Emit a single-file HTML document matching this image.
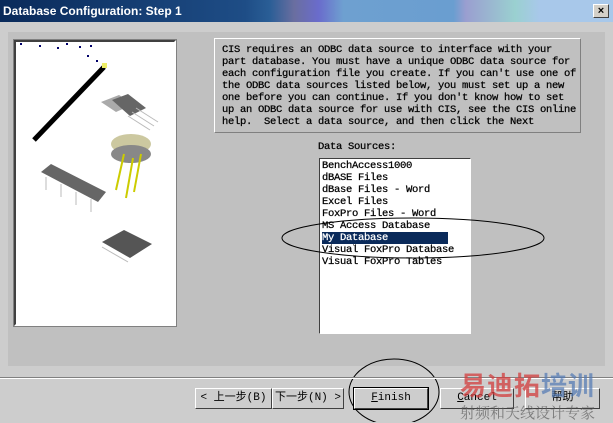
<!DOCTYPE html><html><head><style>
*{margin:0;padding:0;box-sizing:border-box}
body{width:613px;height:422px;background:#cdcdcd;position:relative;overflow:hidden;font-family:"Liberation Mono","Noto Sans CJK SC",monospace;font-size:10px;color:#000}
.a{position:absolute}
.m{font-family:"Liberation Mono",monospace;font-size:10.5px;letter-spacing:-0.3px;-webkit-text-stroke:0.25px #000}
.title{left:0;top:0;width:613px;height:22px;background:linear-gradient(90deg,#0a2a5a 0,#1e4d86 40%,#2a5e96 44%,#6a6ea0 48%,#6a6ccc 52%,#6ea0d0 56%,#6a9ed0 74%,#9a9ed0 76%,#9ad0d0 84%,#a8c8ea 88%,#a8c8ea 100%);color:#fff;font:bold 12px "Liberation Sans",sans-serif;padding:4px 3px}
.x{right:4px;top:4px;width:16px;height:14px;background:#d4d0c8;border:1px solid;border-color:#fff #404040 #404040 #fff;color:#000;font:bold 11px "Liberation Sans";text-align:center;line-height:12px}
.panel{left:8px;top:32px;width:597px;height:334px;background:#c0c0c0}
.pic{left:14px;top:40px;width:162px;height:286px;background:#fff;border:2px solid;border-color:#404040 #fff #fff #404040;outline:1px solid #808080}
.txt{left:214px;top:38px;width:367px;height:95px;border:1px solid;border-color:#fff #808080 #808080 #fff;padding:5px 7px;line-height:12px;white-space:pre}
.lb{left:319px;top:158px;width:152px;height:176px;background:#fff;border:1px solid;border-color:#404040 #fff #fff #404040;line-height:12px;padding:1px 2px;white-space:pre}
.sel{background:#0a2a5a;color:#fff;-webkit-text-stroke:0.25px #fff;outline:1px dotted #fff}
.sep{left:0;top:377px;width:613px;height:2px;border-top:1px solid #808080;border-bottom:1px solid #fff}
.btn{top:388px;height:21px;border:1px solid;border-color:#fff #404040 #404040 #fff;background:#cdcdcd;text-align:center;line-height:19px;font-size:11px}
</style></head><body>
<div class="a title">Database Configuration: Step 1</div>
<div class="a x">×</div>
<div class="a panel"></div>
<div class="a pic">
<svg width="158" height="282" style="position:absolute;left:0;top:0">
<g fill="#00006a"><rect x="4" y="1" width="2" height="2"/><rect x="23" y="3" width="2" height="2"/><rect x="41" y="5" width="2" height="2"/><rect x="50" y="1" width="2" height="2"/><rect x="63" y="4" width="2" height="2"/><rect x="74" y="3" width="2" height="2"/><rect x="71" y="13" width="2" height="2"/><rect x="80" y="18" width="2" height="2"/></g>
<line x1="18" y1="98" x2="88" y2="25" stroke="#000" stroke-width="5"/>
<rect x="86" y="21" width="5" height="5" fill="#ee6"/>
<polygon points="85,60 103,53 118,62 100,70" fill="#aaa"/><polygon points="96,58 112,52 130,66 114,74" fill="#666"/>
<g stroke="#bbb"><line x1="120" y1="66" x2="142" y2="80"/><line x1="116" y1="70" x2="138" y2="84"/><line x1="112" y1="74" x2="134" y2="88"/></g>
<ellipse cx="115" cy="102" rx="20" ry="10" fill="#ccc8a0"/><ellipse cx="115" cy="112" rx="20" ry="9" fill="#888"/>
<g stroke="#cc0" stroke-width="2"><line x1="108" y1="112" x2="100" y2="148"/><line x1="117" y1="116" x2="110" y2="156"/><line x1="125" y1="112" x2="118" y2="150"/></g>
<polygon points="25,130 35,122 90,150 82,160" fill="#666"/>
<g stroke="#bbb"><line x1="30" y1="135" x2="30" y2="148"/><line x1="45" y1="142" x2="45" y2="155"/><line x1="60" y1="150" x2="60" y2="163"/><line x1="75" y1="157" x2="75" y2="170"/></g>
<polygon points="86,200 108,188 136,202 114,216" fill="#555"/>
<g stroke="#bbb"><line x1="86" y1="205" x2="112" y2="220"/></g>
</svg></div>
<div class="a txt m">CIS requires an ODBC data source to interface with your
part database. You must have a unique ODBC data source for
each configuration file you create. If you can't use one of
the ODBC data sources listed below, you must set up a new
one before you can continue. If you don't know how to set
up an ODBC data source for use with CIS, see the CIS online
help.  Select a data source, and then click the Next</div>
<div class="a m" style="left:318px;top:141px">Data Sources:</div>
<div class="a lb m">BenchAccess1000
dBASE Files
dBase Files - Word
Excel Files
FoxPro Files - Word
MS Access Database
<span class="sel">My Database          </span>
Visual FoxPro Database
Visual FoxPro Tables</div>
<svg class="a" style="left:0;top:0" width="613" height="422"><ellipse cx="413" cy="238" rx="131" ry="20" fill="none" stroke="#000"/><ellipse cx="394" cy="392" rx="45" ry="33" fill="none" stroke="#000"/></svg>
<div class="a sep"></div>
<div class="a btn" style="left:195px;width:77px">&lt; 上一步(B)</div>
<div class="a btn" style="left:272px;width:72px">下一步(N) &gt;</div>
<div class="a btn" style="left:354px;width:74px;outline:1px solid #000"><u>F</u>inish</div>
<div class="a btn" style="left:440px;width:74px"><u>C</u>ancel</div>
<div class="a btn" style="left:525px;width:75px">帮助</div>
<div class="a" style="left:460px;top:366px;font:bold 26px 'Noto Sans CJK SC',sans-serif;color:rgba(210,60,60,.75);letter-spacing:1px">易迪拓<span style="color:rgba(80,120,180,.7)">培训</span></div>
<div class="a" style="left:460px;top:402px;font:15px 'Noto Serif CJK SC',serif;color:rgba(90,90,90,.7)">射频和天线设计专家</div>
</body></html>
